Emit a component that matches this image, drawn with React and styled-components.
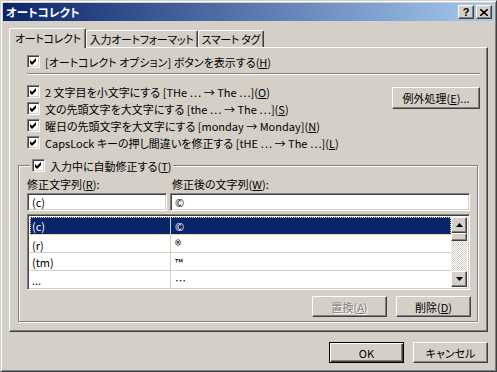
import React from 'react'
import styled, { createGlobalStyle } from 'styled-components'

const FACE = '#D4D0C8'

const GlobalStyle = createGlobalStyle`
  body {
    margin: 0;
    background: ${FACE};
    font-family: "Noto Sans CJK JP", "Noto Sans", sans-serif;
    font-size: 11px;
    color: #000;
    font-feature-settings: "palt" 1;
  }
`

const Window = styled.div`
  width: 497px;
  height: 372px;
  box-sizing: border-box;
  background: ${FACE};
  border: 1px solid;
  border-color: ${FACE} #404040 #404040 ${FACE};
  box-shadow: inset 1px 1px #fff, inset -1px -1px #808080;
  padding: 2px;
  display: flex;
  flex-direction: column;
`

const TitleBar = styled.div`
  height: 18px;
  flex: none;
  display: flex;
  align-items: center;
  padding: 0 2px 0 3px;
  background: linear-gradient(to right, #0A246A, #A6CAF0);
  color: #fff;
  font-weight: bold;
  font-size: 11.5px;
`

const Title = styled.span`
  flex: 1;
  line-height: 18px;
`

const raised = `
  border: 1px solid;
  border-color: #fff #404040 #404040 #fff;
  box-shadow: inset -1px -1px #808080;
  background: ${FACE};
  box-sizing: border-box;
`

const sunken = `
  border: 1px solid;
  border-color: #808080 #fff #fff #808080;
  box-shadow: inset 1px 1px #404040, inset -1px -1px ${FACE};
  box-sizing: border-box;
`

const CaptionButton = styled.div`
  ${raised}
  width: 16px;
  height: 14px;
  margin-left: 2px;
  display: flex;
  align-items: center;
  justify-content: center;
  color: #000;
  font-family: "Liberation Sans", sans-serif;
  font-weight: bold;
  font-size: 11px;
  line-height: 1;
`

const Body = styled.div`
  flex: 1;
  display: flex;
  flex-direction: column;
  padding: 7px 6px 0 6px;
`

const TabStrip = styled.div`
  height: 20px;
  display: flex;
  align-items: flex-end;
  margin-bottom: -1px;
  position: relative;
  z-index: 1;
`

const Tab = styled.div`
  box-sizing: border-box;
  background: ${FACE};
  border-top: 1px solid #fff;
  border-left: 1px solid #fff;
  border-right: 1px solid #404040;
  box-shadow: inset -1px 0 #808080;
  border-radius: 2px 2px 0 0;
  white-space: nowrap;
  letter-spacing: -0.3px;
  display: flex;
  align-items: center;
  height: ${p => (p.$active ? '20px' : '17px')};
  margin-bottom: ${p => (p.$active ? '0' : '1px')};
  padding: ${p => (p.$active ? '0 4px 2px 5px' : '0 3px 0 3px')};
`

const Panel = styled.div`
  height: 285px;
  box-sizing: border-box;
  border: 1px solid;
  border-color: #fff #404040 #404040 #fff;
  box-shadow: inset -1px -1px #808080;
  padding: 5px 8px 0 8px;
  display: flex;
  flex-direction: column;
`

const TopSection = styled.div`
  padding-left: 9px;
`

const CheckRow = styled.div`
  height: 17px;
  display: flex;
  align-items: center;
  gap: 5px;
  white-space: nowrap;
`

const Box = styled.span`
  ${sunken}
  width: 13px;
  height: 13px;
  background: #fff;
  flex: none;
  display: inline-flex;
  align-items: center;
  justify-content: center;
`

const Separator = styled.div`
  border-top: 1px solid #808080;
  border-bottom: 1px solid #fff;
  margin: 3px -1px 8px 9px;
`

const Options = styled.div`
  display: flex;
  align-items: flex-start;
  padding-left: 9px;
`

const OptionList = styled.div`
  flex: 1;
`

const Button = styled.div`
  box-sizing: border-box;
  width: ${p => p.$width || 75}px;
  height: ${p => p.$height || 21}px;
  display: flex;
  align-items: center;
  justify-content: center;
  background: ${FACE};
  white-space: nowrap;
  border: 1px solid;
  border-color: ${p => (p.$default ? '#000' : '#fff #404040 #404040 #fff')};
  box-shadow: ${p =>
    p.$default
      ? 'inset 1px 1px #fff, inset -1px -1px #404040, inset -2px -2px #808080'
      : 'inset -1px -1px #808080'};
  color: ${p => (p.$disabled ? '#808080' : '#000')};
  text-shadow: ${p => (p.$disabled ? '1px 1px #fff' : 'none')};
  margin: ${p => p.$margin || '0'};
`

const Group = styled.div`
  margin: 14px 1px 0 0;
  height: 157px;
  box-sizing: border-box;
  border: 1px solid #808080;
  box-shadow: inset 1px 1px #fff, 1px 1px #fff;
  padding: 0 7px 0 8px;
  display: flex;
  flex-direction: column;
`

const Legend = styled.div`
  align-self: flex-start;
  margin: -9px 0 0 3px;
  padding: 0 2px;
  background: ${FACE};
  height: 17px;
  display: flex;
  align-items: center;
  gap: 5px;
  white-space: nowrap;
`

const FieldGrid = styled.div`
  display: grid;
  grid-template-columns: 140px 1fr;
  column-gap: 3px;
  margin-top: 1px;
  height: ${p => p.$height}px;
`

const FieldLabel = styled.div`
  display: flex;
  align-items: center;
  padding-left: ${p => p.$indent || 0}px;
  white-space: nowrap;
`

const Input = styled.div`
  ${sunken}
  background: #fff;
  padding-left: 4px;
  display: flex;
  align-items: center;
`

const List = styled.div`
  ${sunken}
  margin-top: 3px;
  height: 76px;
  padding: 2px;
  display: flex;
  background: #fff;
`

const Rows = styled.div`
  flex: 1;
`

const ListRow = styled.div`
  display: grid;
  grid-template-columns: 141px 1fr;
  height: 18px;
  box-sizing: border-box;
  border-bottom: 1px solid ${FACE};
  background: ${p => (p.$selected ? '#0A246A' : '#fff')};
  color: ${p => (p.$selected ? '#fff' : '#000')};
  outline: ${p => (p.$selected ? '1px dotted #E8E4A0' : 'none')};
  outline-offset: -1px;
`

const Cell = styled.div`
  display: flex;
  align-items: center;
  padding-left: ${p => p.$pad}px;
  border-right: ${p => (p.$divider ? `1px solid ${FACE}` : 'none')};
  font-size: ${p => p.$size || 11}px;
`

const ScrollBar = styled.div`
  width: 16px;
  display: flex;
  flex-direction: column;
`

const ScrollButton = styled.div`
  ${raised}
  height: 16px;
  display: flex;
  align-items: center;
  justify-content: center;
`

const Thumb = styled.div`
  ${raised}
  height: 8px;
`

const Track = styled.div`
  flex: 1;
  background: repeating-conic-gradient(#fff 0 25%, ${FACE} 0 50%) 0 0 / 2px 2px;
`

const ButtonRow = styled.div`
  display: flex;
  justify-content: flex-end;
  gap: 9px;
  margin-top: ${p => p.$top}px;
  margin-right: ${p => p.$right || 0}px;
`

const Check = () => (
  <svg width="7" height="7" viewBox="0 0 7 7">
    <polygon points="0,2 2,4 6,0 6,3 2,7 0,5" fill="#000" />
  </svg>
)

const Arrow = ({ down }) => (
  <svg width="7" height="4" viewBox="0 0 7 4">
    <polygon points={down ? '0,0 7,0 3.5,4' : '0,4 7,4 3.5,0'} fill="#000" />
  </svg>
)

const CheckItem = ({ children }) => (
  <CheckRow>
    <Box><Check /></Box>
    <span>{children}</span>
  </CheckRow>
)

const K = ({ k }) => (
  <>(<u>{k}</u>)</>
)

const replacements = [
  ['(c)', '©', 11],
  ['(r)', '®', 13],
  ['(tm)', '™', 11],
  ['...', '…', 11],
]

export default function App() {
  return (
    <>
      <GlobalStyle />
      <Window>
        <TitleBar>
          <Title>オートコレクト</Title>
          <CaptionButton>?</CaptionButton>
          <CaptionButton>
            <svg width="8" height="7" viewBox="0 0 8 7">
              <path d="M0 0 L8 7 M8 0 L0 7" stroke="#000" strokeWidth="1.6" />
            </svg>
          </CaptionButton>
        </TitleBar>
        <Body>
          <TabStrip>
            <Tab $active>オートコレクト</Tab>
            <Tab>入力オートフォーマット</Tab>
            <Tab>スマート タグ</Tab>
          </TabStrip>
          <Panel>
            <TopSection>
              <CheckItem>[オートコレクト オプション] ボタンを表示する<K k="H" /></CheckItem>
            </TopSection>
            <Separator />
            <Options>
              <OptionList>
                <CheckItem>2 文字目を小文字にする [THe … → The …]<K k="O" /></CheckItem>
                <CheckItem>文の先頭文字を大文字にする [the … → The …]<K k="S" /></CheckItem>
                <CheckItem>曜日の先頭文字を大文字にする [monday → Monday]<K k="N" /></CheckItem>
                <CheckItem>CapsLock キーの押し間違いを修正する [tHE … → The …]<K k="L" /></CheckItem>
              </OptionList>
              <Button $width={88} $height={22} $margin="4px -1px 0 0">例外処理<K k="E" />...</Button>
            </Options>
            <Group>
              <Legend>
                <Box><Check /></Box>
                <span>入力中に自動修正する<K k="T" /></span>
              </Legend>
              <FieldGrid $height={17}>
                <FieldLabel>修正文字列<K k="R" />:</FieldLabel>
                <FieldLabel $indent={2}>修正後の文字列<K k="W" />:</FieldLabel>
              </FieldGrid>
              <FieldGrid $height={18}>
                <Input>(c)</Input>
                <Input>©</Input>
              </FieldGrid>
              <List>
                <Rows>
                  {replacements.map(([from, to, size], i) => (
                    <ListRow key={from} $selected={i === 0}>
                      <Cell $pad={2} $divider>{from}</Cell>
                      <Cell $pad={4} $size={size}>{to}</Cell>
                    </ListRow>
                  ))}
                </Rows>
                <ScrollBar>
                  <ScrollButton><Arrow /></ScrollButton>
                  <Thumb />
                  <Track />
                  <ScrollButton><Arrow down /></ScrollButton>
                </ScrollBar>
              </List>
              <ButtonRow $top={6} $right={-1}>
                <Button $disabled>置換<K k="A" /></Button>
                <Button>削除<K k="D" /></Button>
              </ButtonRow>
            </Group>
          </Panel>
          <ButtonRow $top={10}>
            <Button $default>OK</Button>
            <Button>キャンセル</Button>
          </ButtonRow>
        </Body>
      </Window>
    </>
  )
}
